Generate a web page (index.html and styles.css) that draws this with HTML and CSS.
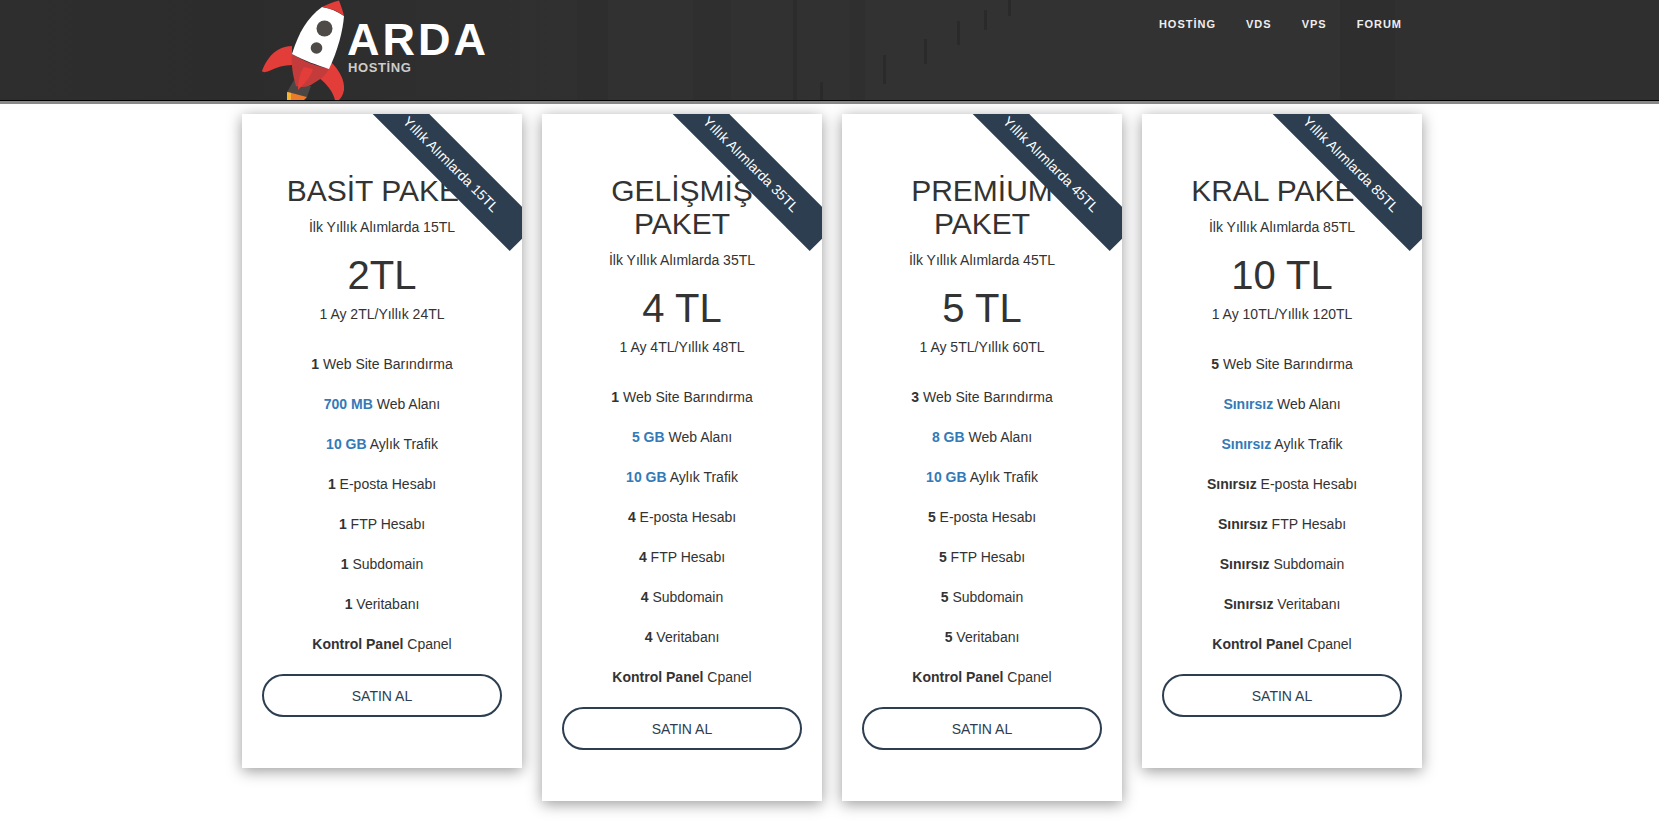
FILE: index.html
```html
<!DOCTYPE html>
<html lang="tr">
<head>
<meta charset="utf-8">
<title>Arda Hosting</title>
<link rel="stylesheet" href="styles.css">
</head>
<body>
<header class="site-header">
  <div class="header-inner">
    <a class="logo" href="#">
      <svg class="rocket" viewBox="0 0 100 100" width="100" height="100" aria-hidden="true">
        <path class="fin" d="M37 46 C27 46 19 51 14 58 C10 63 8 68 7 71 C8 73 11 72 14 71 C22 67 29 65 37 65 Z"/>
        <path class="fin" d="M76 62 C84 70 90 80 89 90 C88 95 86 98 84 100 L80 100 C78 92 72 84 64 78 Z"/>
        <path class="exhaust" d="M39 80 L32 92 L52 97 L56 86 Z"/>
        <path class="flame-orange" d="M33 92 L52 97 L49 100 L35 100 Z"/>
        <path class="flame-yellow" d="M32 92 L36 93 L36 100 L32 100 Z"/>
        <path class="base" d="M37 54 C50 62 62 66 74 69 C70 76 66 79 59 83 C54 87 46 88 41 86 C38 76 36 65 37 54 Z"/>
        <path class="fin-center" d="M49 67 L58 69 C56 76 52 81 43 90 C43 80 45 73 49 67 Z"/>
        <path class="body" d="M67 7 C52 18 44 32 37 54 C50 61 62 65 74 69 C83 50 88 30 89 16 C82 11 74 8 67 7 Z"/>
        <path class="fin" d="M67 7 C73 4 78 2 84 0.500 C86 6 88 11 89 16 C83 11 75 8 67 7 Z"/>
        <circle class="hole" cx="69.500" cy="28.500" r="8"/>
        <circle class="hole" cx="61.500" cy="48" r="5.800"/>
      </svg>
      <span class="brand">
        <span class="brand-name">ARDA</span>
        <span class="brand-sub">HOSTİNG</span>
      </span>
    </a>
    <nav class="main-nav">
      <a href="#">HOSTİNG</a>
      <a href="#">VDS</a>
      <a href="#">VPS</a>
      <a href="#">FORUM</a>
    </nav>
  </div>
</header>
<div class="header-strip"></div>

<main class="plans">
  <article class="plan">
    <div class="ribbon">Yıllık Alımlarda 15TL</div>
    <h2 class="plan-title">BASİT PAKET</h2>
    <p class="plan-note">İlk Yıllık Alımlarda 15TL</p>
    <div class="plan-price">2TL</div>
    <p class="plan-period">1 Ay 2TL/Yıllık 24TL</p>
    <ul class="features">
      <li><strong>1</strong> Web Site Barındırma</li>
      <li><strong class="hl">700 MB</strong> Web Alanı</li>
      <li><strong class="hl">10 GB</strong> Aylık Trafik</li>
      <li><strong>1</strong> E-posta Hesabı</li>
      <li><strong>1</strong> FTP Hesabı</li>
      <li><strong>1</strong> Subdomain</li>
      <li><strong>1</strong> Veritabanı</li>
      <li><strong>Kontrol Panel</strong> Cpanel</li>
    </ul>
    <a class="buy" href="#">SATIN AL</a>
  </article>

  <article class="plan">
    <div class="ribbon">Yıllık Alımlarda 35TL</div>
    <h2 class="plan-title">GELİŞMİŞ PAKET</h2>
    <p class="plan-note">İlk Yıllık Alımlarda 35TL</p>
    <div class="plan-price">4 TL</div>
    <p class="plan-period">1 Ay 4TL/Yıllık 48TL</p>
    <ul class="features">
      <li><strong>1</strong> Web Site Barındırma</li>
      <li><strong class="hl">5 GB</strong> Web Alanı</li>
      <li><strong class="hl">10 GB</strong> Aylık Trafik</li>
      <li><strong>4</strong> E-posta Hesabı</li>
      <li><strong>4</strong> FTP Hesabı</li>
      <li><strong>4</strong> Subdomain</li>
      <li><strong>4</strong> Veritabanı</li>
      <li><strong>Kontrol Panel</strong> Cpanel</li>
    </ul>
    <a class="buy" href="#">SATIN AL</a>
  </article>

  <article class="plan">
    <div class="ribbon">Yıllık Alımlarda 45TL</div>
    <h2 class="plan-title">PREMİUM PAKET</h2>
    <p class="plan-note">İlk Yıllık Alımlarda 45TL</p>
    <div class="plan-price">5 TL</div>
    <p class="plan-period">1 Ay 5TL/Yıllık 60TL</p>
    <ul class="features">
      <li><strong>3</strong> Web Site Barındırma</li>
      <li><strong class="hl">8 GB</strong> Web Alanı</li>
      <li><strong class="hl">10 GB</strong> Aylık Trafik</li>
      <li><strong>5</strong> E-posta Hesabı</li>
      <li><strong>5</strong> FTP Hesabı</li>
      <li><strong>5</strong> Subdomain</li>
      <li><strong>5</strong> Veritabanı</li>
      <li><strong>Kontrol Panel</strong> Cpanel</li>
    </ul>
    <a class="buy" href="#">SATIN AL</a>
  </article>

  <article class="plan">
    <div class="ribbon">Yıllık Alımlarda 85TL</div>
    <h2 class="plan-title">KRAL PAKET</h2>
    <p class="plan-note">İlk Yıllık Alımlarda 85TL</p>
    <div class="plan-price">10 TL</div>
    <p class="plan-period">1 Ay 10TL/Yıllık 120TL</p>
    <ul class="features">
      <li><strong>5</strong> Web Site Barındırma</li>
      <li><strong class="hl">Sınırsız</strong> Web Alanı</li>
      <li><strong class="hl">Sınırsız</strong> Aylık Trafik</li>
      <li><strong>Sınırsız</strong> E-posta Hesabı</li>
      <li><strong>Sınırsız</strong> FTP Hesabı</li>
      <li><strong>Sınırsız</strong> Subdomain</li>
      <li><strong>Sınırsız</strong> Veritabanı</li>
      <li><strong>Kontrol Panel</strong> Cpanel</li>
    </ul>
    <a class="buy" href="#">SATIN AL</a>
  </article>
</main>
</body>
</html>
```
FILE: styles.css
```css
* { box-sizing: border-box; }

html, body { margin: 0; padding: 0; }

body {
  background: #fff;
  color: #333;
  font-family: "Liberation Sans", Arial, sans-serif;
  font-size: 14px;
  line-height: 20px;
}

a { text-decoration: none; }

.site-header {
  height: 101px;
  border-bottom: 1px solid #000;
  background-color: #313131;
  background-image:
    linear-gradient(#2a2a2a, #2a2a2a), linear-gradient(#2a2a2a, #2a2a2a),
    linear-gradient(#2a2a2a, #2a2a2a), linear-gradient(#2a2a2a, #2a2a2a),
    linear-gradient(#2a2a2a, #2a2a2a), linear-gradient(#2a2a2a, #2a2a2a),
    linear-gradient(90deg,
      #2e2e2e 0, #2c2c2c 240px, #2e2e2e 380px, #303030 577px,
      #2e2e2e 577px, #2e2e2e 608px, #313131 608px, #313131 693px,
      #2f2f2f 693px, #2f2f2f 731px, #313131 731px, #313131 793px,
      #2c2c2c 793px, #2c2c2c 797px, #313131 797px, #313131 850px,
      #2f2f2f 850px, #2f2f2f 865px, #323232 865px, #323232 1340px,
      #2e2e2e 1340px, #2e2e2e 1395px, #303030 1395px, #2f2f2f 1659px);
  background-repeat: no-repeat;
  background-size: 3px 18px, 3px 29px, 3px 25px, 3px 24px, 3px 20px, 3px 16px, 100% 100%;
  background-position: 820px 82px, 883px 55px, 924px 39px, 957px 21px, 984px 10px, 1008px 0, 0 0;
  overflow: hidden;
}

.header-inner {
  display: flex;
  justify-content: space-between;
  align-items: flex-start;
  height: 100px;
  padding: 0 257px 0 255px;
}

.logo { display: flex; }

.rocket { flex: none; display: block; }

.fin { fill: #e23d39; }
.base { fill: #c43b3b; }
.fin-center { fill: #e23d39; }
.body { fill: #fff; }
.hole { fill: #4d4a47; }
.exhaust { fill: #4a4744; }
.flame-orange { fill: #ee7a2c; }
.flame-yellow { fill: #f6b52e; }

.brand {
  display: flex;
  flex-direction: column;
  margin-left: -7px;
  padding-top: 19px;
}

.brand-name {
  color: #fff;
  font-size: 45px;
  font-weight: 700;
  line-height: 42px;
  letter-spacing: 3px;
  margin-left: -1px;
}

.brand-sub {
  color: #ccc;
  font-size: 13px;
  font-weight: 700;
  line-height: 14px;
  letter-spacing: .6px;
}

.main-nav {
  display: flex;
  gap: 30px;
  padding-top: 14px;
}

.main-nav a {
  color: #eee;
  font-size: 11px;
  font-weight: 700;
  line-height: 20px;
  letter-spacing: 1px;
}

.header-strip {
  height: 3px;
  background: #888;
}

.plans {
  display: flex;
  align-items: flex-start;
  gap: 20px;
  padding: 10px 0 20px 242px;
}

.plan {
  position: relative;
  flex: none;
  width: 280px;
  padding: 60px 20px 51px;
  overflow: hidden;
  background: #fff;
  text-align: center;
  box-shadow: 0 3px 14px rgba(0, 0, 0, .4);
}

.ribbon {
  position: absolute;
  top: 30px;
  left: 106px;
  width: 206px;
  height: 40px;
  background: #2c3e50;
  color: #fff;
  line-height: 40px;
  text-align: center;
  transform: rotate(45deg);
}

.plan-title {
  margin: 0 10px;
  font-size: 30px;
  font-weight: 400;
  line-height: 33px;
}

.plan-note {
  margin: 10px 0 0;
}

.plan-price {
  margin-top: 16px;
  font-size: 40px;
  font-weight: 400;
  line-height: 44px;
}

.plan-period {
  margin: 7px 0 0;
}

.features {
  list-style: none;
  margin: 20px 0 0;
  padding: 0;
}

.features li {
  padding: 10px 0;
}

.hl { color: #337ab7; }

.buy {
  display: block;
  margin-top: 10px;
  height: 43px;
  border: 2px solid #2c3e50;
  border-radius: 22px;
  color: #2c3e50;
  line-height: 40px;
}
```
